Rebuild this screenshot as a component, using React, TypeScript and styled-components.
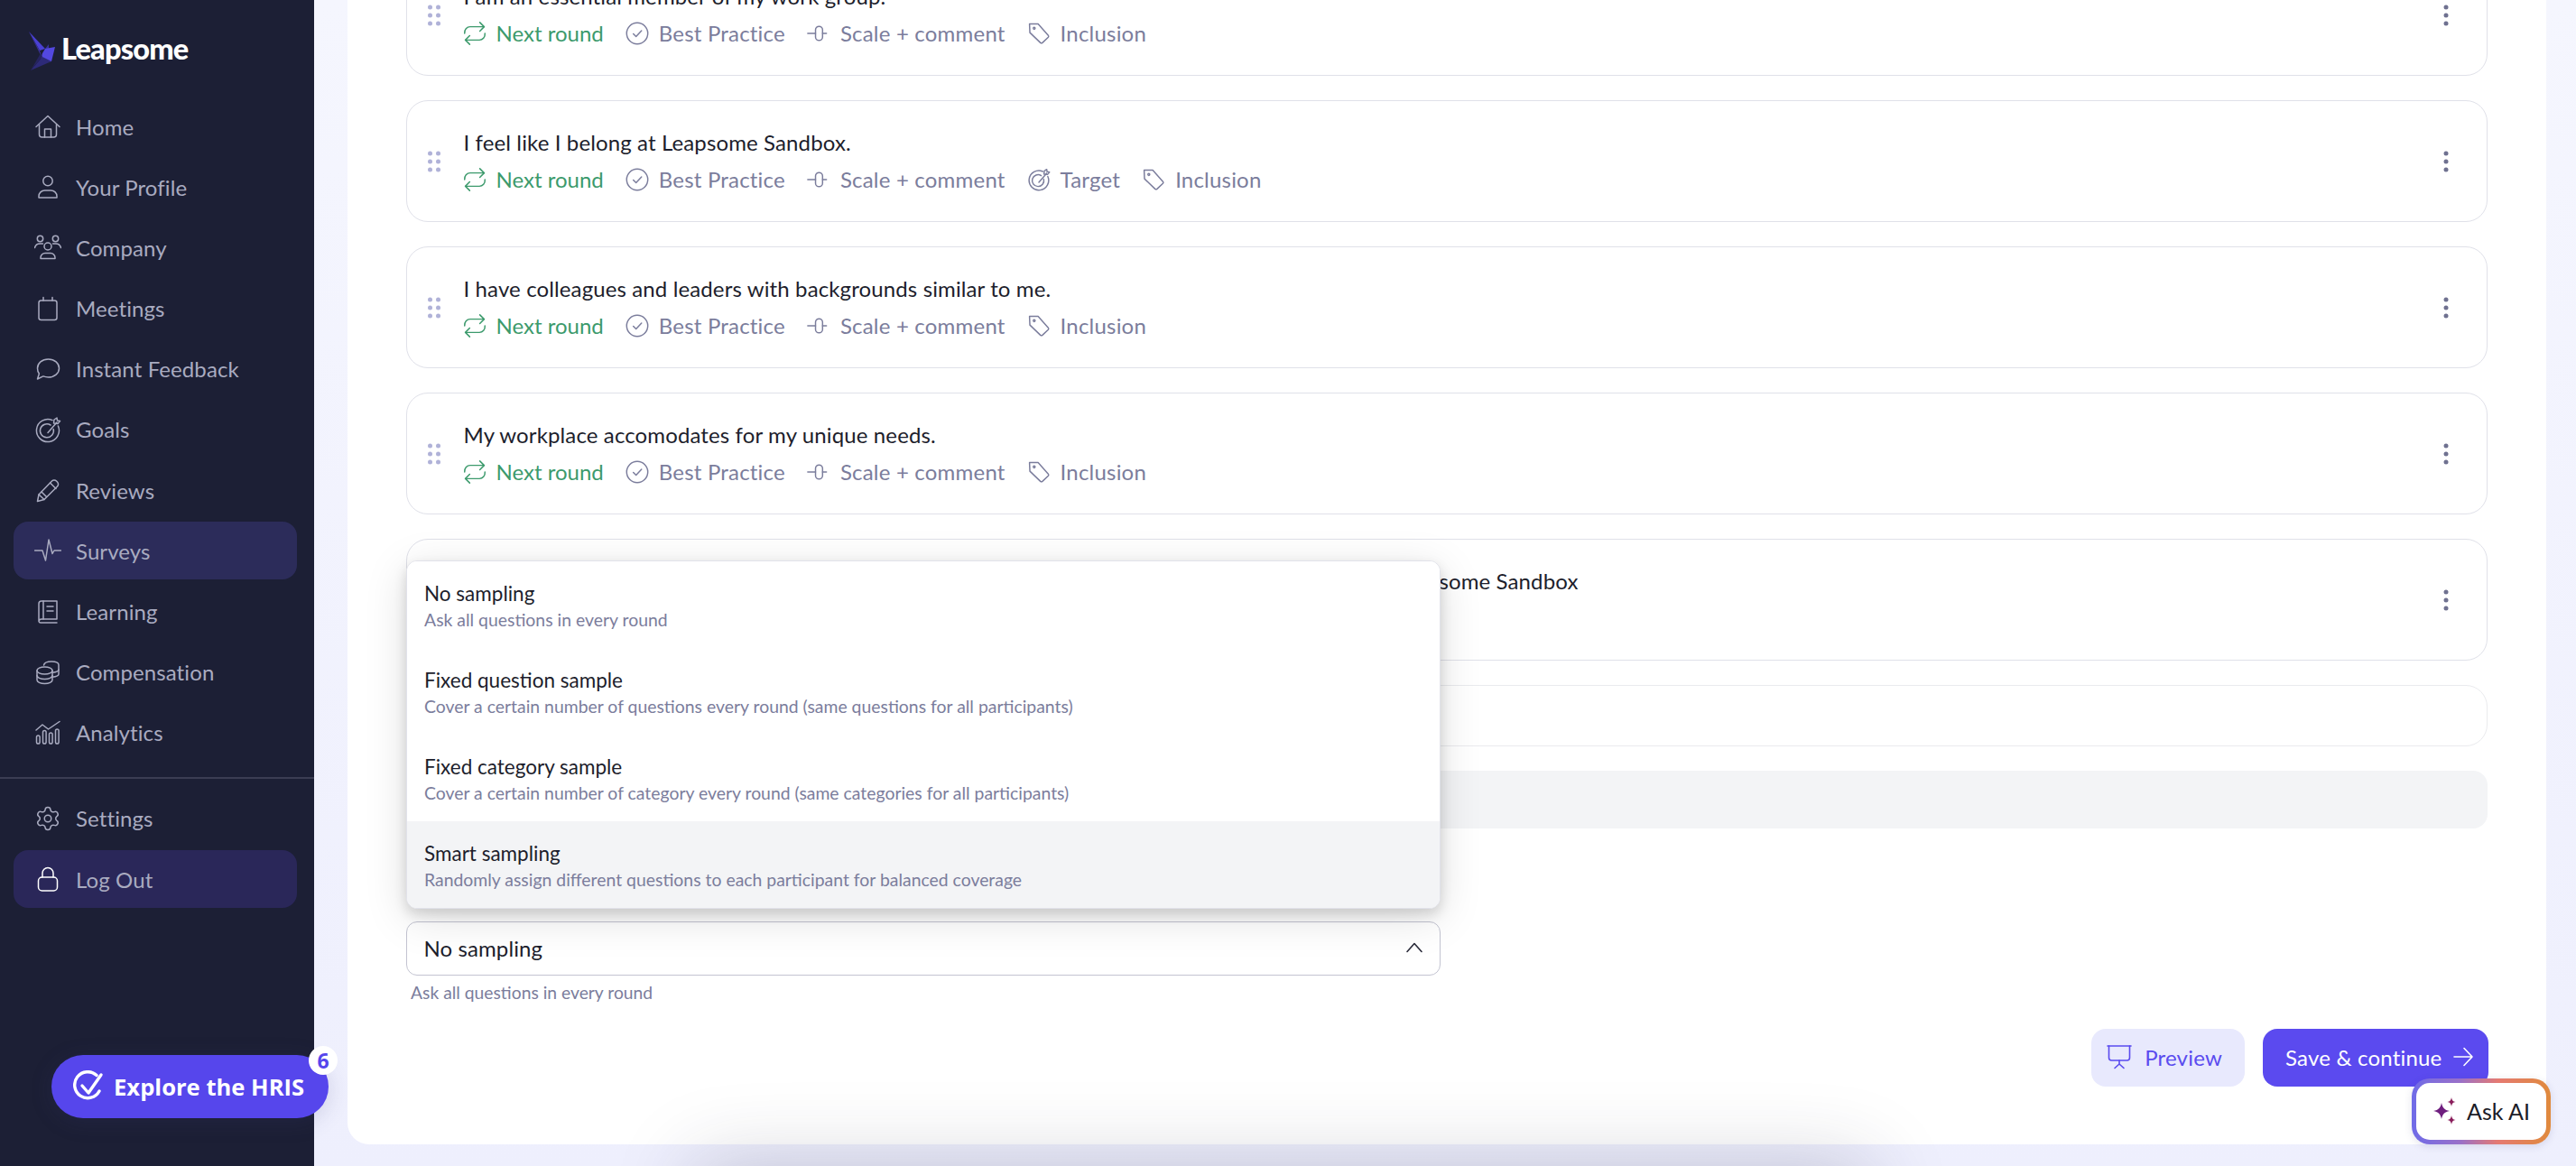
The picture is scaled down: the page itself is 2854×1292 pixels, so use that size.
import React, { FC, ReactNode } from "react";
import styled, { createGlobalStyle } from "styled-components";
import { Settings } from "lucide-react";

const GlobalStyle = createGlobalStyle`
  html, body {
    margin: 0;
    padding: 0;
    height: 100%;
    overflow: hidden;
    background: #eef0fd;
    font-family: "Lato", "Noto Sans", sans-serif;
  }
  * { box-sizing: border-box; }
`;

const Stroke: FC<{ size?: number; children: ReactNode }> = ({ size = 30, children }) => (
  <svg width={size} height={size} viewBox="0 0 30 30" fill="none" stroke="currentColor" strokeWidth={size < 30 ? 1.7 : 1.5} strokeLinecap="round" strokeLinejoin="round">
    {children}
  </svg>
);

const HomeIcon = () => (
  <Stroke>
    <path d="M2 15.5 15 3.5l13 12" />
    <path d="M5.5 13v11a3 3 0 0 0 3 3h13a3 3 0 0 0 3-3V13" />
    <path d="M11.5 27v-9h7v9" />
  </Stroke>
);
const ProfileIcon = () => (
  <Stroke>
    <circle cx="15" cy="8.5" r="5.2" />
    <path d="M5 27v-1.5a6.5 6.5 0 0 1 6.5-6.5h7a6.5 6.5 0 0 1 6.5 6.5V27z" />
  </Stroke>
);
const CompanyIcon = () => (
  <Stroke>
    <circle cx="15" cy="14" r="4" />
    <path d="M7 27.5v-1a5 5 0 0 1 5-5h6a5 5 0 0 1 5 5v1z" />
    <circle cx="6.5" cy="5.5" r="3.2" />
    <circle cx="23.5" cy="5.5" r="3.2" />
    <path d="M.5 15.5a6 6 0 0 1 6-4.5h3" />
    <path d="M29.5 15.5a6 6 0 0 0-6-4.5h-3" />
  </Stroke>
);
const CalendarIcon = () => (
  <Stroke>
    <rect x="5" y="6" width="20" height="21.5" rx="2.5" />
    <path d="M10 2.5V6M20 2.5V6" />
  </Stroke>
);
const ChatIcon = () => (
  <Stroke>
    <path d="M15.5 4C22.4 4 27.5 8.5 27.5 14S22.4 24 15.5 24c-2 0-3.9-.4-5.6-1.1L3.5 26l1.9-6C3.9 18.3 3.5 16.2 3.5 14 3.5 8.5 8.6 4 15.5 4z" />
  </Stroke>
);
const GoalIcon: FC<{ size?: number }> = ({ size }) => (
  <Stroke size={size}>
    <path d="M20 4.6A12.5 12.5 0 1 0 26.4 11" />
    <path d="M18 10a7.5 7.5 0 1 0 3.2 4.5" />
    <path d="M15 18.5 25 7" />
    <path d="m21.5 8 .5-4 3-2 .5 3 3 .5-2.5 3z" />
  </Stroke>
);
const PencilIcon = () => (
  <Stroke>
    <path d="M3.5 27.5 5 20 19.5 5a3.5 3.5 0 0 1 5 0l1 1a3.5 3.5 0 0 1 0 5L11 25.5z" />
    <path d="m17.5 7 6.5 6.5M5 20l6 5.5M8 17l5.5 5.5" />
  </Stroke>
);
const ActivityIcon = () => (
  <Stroke>
    <path d="M.5 15H9l3.5 11L16 3l4 15.5L22 15h7.5" />
  </Stroke>
);
const BookIcon = () => (
  <Stroke>
    <path d="M5 24.5V6a3 3 0 0 1 3-3h17v20H8a3 3 0 0 0-3 2.5 2 2 0 0 0 2 1.5h18" />
    <path d="M10 3v20M14 9h7M14 14h7" />
  </Stroke>
);
const CoinsIcon = () => (
  <Stroke>
    <ellipse cx="11.5" cy="13" rx="8.5" ry="4" />
    <path d="M3 13v10.5c0 2.2 3.8 4 8.5 4s8.5-1.8 8.5-4V13" />
    <path d="M3 18.5c0 2.2 3.8 4 8.5 4s8.5-1.8 8.5-4" />
    <path d="M10.5 7c.5-2.2 4-4 8.5-4 4.7 0 8 1.6 8 3.8V17c0 1.3-2.5 2.7-7 3.3" />
    <path d="M27 12c0 1.3-2.5 2.7-7 3.3" />
  </Stroke>
);
const ChartIcon = () => (
  <Stroke>
    <path d="m2 12 7-6 6.5 5L28 2.5" />
    <rect x="2.5" y="18" width="3.6" height="9" rx="1.8" />
    <rect x="9.5" y="12.5" width="3.6" height="14.5" rx="1.8" />
    <rect x="16.5" y="15" width="3.6" height="12" rx="1.8" />
    <rect x="23.5" y="11" width="3.6" height="16" rx="1.8" />
  </Stroke>
);
const LockIcon = () => (
  <Stroke>
    <rect x="4.5" y="13" width="21" height="15" rx="4" />
    <path d="M9 13V8.5a6 6 0 0 1 12 0V13" />
  </Stroke>
);
const RepeatIcon = () => (
  <Stroke size={26}>
    <path d="M2 15c-.5-5 3-8.5 7-8.5h18" />
    <path d="m21.5 1 5.5 5.5-5.5 5.5" />
    <path d="M28 15c.5 5-3 8.5-7 8.5H3" />
    <path d="m8.5 18-5.5 5.5L8.5 29" />
  </Stroke>
);
const CheckCircleIcon = () => (
  <Stroke size={26}>
    <circle cx="15" cy="15" r="13.5" />
    <path d="m10 15.5 3.5 3.5 7-7.5" />
  </Stroke>
);
const ScaleIcon = () => (
  <Stroke size={26}>
    <path d="M1 15h10M20 15h5" />
    <rect x="11" y="6" width="9" height="18" rx="4.5" />
  </Stroke>
);
const TagIcon = () => (
  <Stroke size={26}>
    <path d="M3 3h11l13 14.5a2 2 0 0 1 0 2.5l-7.5 7a2 2 0 0 1-2.5 0L3.5 14z" />
    <circle cx="9" cy="8.5" r="1.2" />
  </Stroke>
);

const LogoMark = () => (
  <svg width="32" height="44" viewBox="0 0 32 44">
    <polygon points="2,1 20,20 14,22" fill="#4a40d4" />
    <polygon points="2,1 14,22 17,31" fill="#3a3299" />
    <polygon points="20,20 24,15 24,21" fill="#3a3299" />
    <polygon points="20,20 31,18 27,34 14,36 17,25" fill="#5348e0" />
    <polygon points="17,29 27,34 4,44" fill="#2d2a78" />
    <polygon points="17,29 4,44 15,25" fill="#26245f" />
  </svg>
);

const Shell = styled.div`
  position: relative;
  display: flex;
  width: 100%;
  height: 100vh;
  overflow: hidden;
`;

const Sidebar = styled.aside`
  flex: 0 0 348px;
  background: #1c1f35;
  padding: 0 19px 0 15px;
  display: flex;
  flex-direction: column;
`;

const LogoRow = styled.div`
  height: 108px;
  flex: none;
  display: flex;
  align-items: flex-start;
  gap: 6px;
  padding: 34px 0 0 15px;
`;

const LogoText = styled.span`
  margin-top: -3px;
  font-size: 32.5px;
  line-height: 46px;
  font-weight: 900;
  letter-spacing: -0.8px;
  color: #ffffff;
`;

const Nav = styled.nav`
  display: flex;
  flex-direction: column;
  gap: 3.2px;
`;

const NavItem = styled.a<{ $active?: boolean; $strong?: boolean }>`
  height: 64px;
  display: flex;
  align-items: center;
  gap: 16px;
  padding-left: 23px;
  border-radius: 16px;
  background: ${(p) => (p.$active ? "#2c2c5a" : p.$strong ? "#2a2759" : "transparent")};
  color: #a9abc0;
  font-size: 24px;
  letter-spacing: 0.1px;
  svg {
    flex: none;
    color: ${(p) => (p.$strong ? "#ffffff" : "#a9abc0")};
  }
`;

const NavDivider = styled.div`
  height: 2px;
  flex: none;
  background: #3b3d53;
  margin: 13.8px -19px 8.8px -15px;
`;

const ExploreButton = styled.button`
  position: absolute;
  left: 57px;
  top: 1169px;
  width: 307px;
  height: 70px;
  border: 0;
  border-radius: 35px;
  background: #5646ec;
  color: #ffffff;
  display: flex;
  align-items: center;
  gap: 11px;
  padding: 0 0 0 24px;
  font-family: "Open Sans", sans-serif;
  font-weight: 700;
  font-size: 25.6px;
  box-shadow: 0 4px 24px rgba(60, 60, 120, 0.18);
`;

const ExploreBadge = styled.span`
  position: absolute;
  right: -10px;
  top: -10px;
  width: 32px;
  height: 32px;
  border-radius: 50%;
  background: #ffffff;
  color: #5646ec;
  font-size: 23px;
  line-height: 32px;
  text-align: center;
`;

const Main = styled.main`
  flex: 1;
  min-width: 0;
  padding: 0 33px 24px 37px;
  background: linear-gradient(180deg, #f5f6fe 0%, #eeeffd 100%);
`;

const Panel = styled.section`
  height: 100%;
  background: #ffffff;
  border-radius: 0 0 24px 24px;
  padding: 0 65px;
  overflow: hidden;
`;

const QuestionList = styled.div`
  margin-top: -51px;
  display: flex;
  flex-direction: column;
  gap: 27px;
`;

const QuestionCard = styled.article`
  height: 135px;
  flex: none;
  display: flex;
  align-items: center;
  gap: 26px;
  padding: 0 42.5px 0 22.5px;
  border: 1.5px solid #e0e1e9;
  border-radius: 24px;
  background: #ffffff;
`;

const QuestionBody = styled.div`
  flex: 1;
  min-width: 0;
  display: flex;
  flex-direction: column;
  gap: 7px;
`;

const QuestionText = styled.div<{ $width?: number }>`
  font-size: 24px;
  line-height: 34px;
  letter-spacing: 0.12px;
  color: #1d1e2c;
  white-space: nowrap;
  width: ${(p) => (p.$width ? `${p.$width}px` : "auto")};
  text-align: ${(p) => (p.$width ? "right" : "left")};
`;

const MetaRow = styled.div`
  display: flex;
  align-items: center;
  gap: 25px;
  height: 34px;
`;

const MetaItem = styled.span<{ $green?: boolean }>`
  display: inline-flex;
  align-items: center;
  gap: 11px;
  margin-left: -1px;
  font-size: 24px;
  line-height: 34px;
  letter-spacing: ${(p) => (p.$green ? "0" : "0.2px")};
  color: ${(p) => (p.$green ? "#3c9a6c" : "#7b7d9c")};
  svg {
    flex: none;
  }
`;

const AddQuestionBox = styled.div`
  height: 68px;
  border: 1.5px solid #eaebee;
  border-radius: 24px;
`;

const GreyBox = styled.div`
  height: 64px;
  background: #f3f4f6;
  border-radius: 16px;
`;

const SamplingField = styled.div`
  width: 1146px;
  margin-top: 103px;
`;

const SelectWrap = styled.div`
  position: relative;
`;

const SelectTrigger = styled.div`
  height: 60px;
  display: flex;
  align-items: center;
  justify-content: space-between;
  padding: 0 18px 2px 18.5px;
  border: 1.5px solid #c3c4d1;
  border-radius: 12px;
  background: #ffffff;
  font-size: 24px;
  letter-spacing: 0.1px;
  color: #1d1e2c;
`;

const HelperText = styled.div`
  margin-top: 5px;
  padding-left: 5px;
  font-size: 19.3px;
  line-height: 28px;
  color: #7b7d9c;
`;

const SelectMenu = styled.ul`
  position: absolute;
  left: 0;
  right: 0;
  bottom: calc(100% + 14px);
  margin: 0;
  padding: 0;
  list-style: none;
  background: #ffffff;
  border: 1px solid #e1e2ea;
  border-radius: 12px;
  overflow: hidden;
  box-shadow: 0 6px 14px rgba(0, 0, 0, 0.14), 0 10px 48px rgba(0, 0, 0, 0.13);
`;

const MenuOption = styled.li<{ $hover?: boolean }>`
  height: 96px;
  padding: 21px 19px 0;
  background: ${(p) => (p.$hover ? "#f3f4f6" : "#ffffff")};
`;

const OptionTitle = styled.div`
  font-size: 22.5px;
  line-height: 30px;
  color: #1d1e2c;
`;

const OptionHint = styled.div`
  font-size: 19.4px;
  line-height: 28px;
  color: #7b7d9c;
`;

const Footer = styled.div`
  display: flex;
  justify-content: flex-end;
  align-items: center;
  gap: 20px;
  margin: 26px -1px 0 0;
`;

const Button = styled.button<{ $primary?: boolean }>`
  height: 64px;
  border: 0;
  border-radius: 16px;
  display: inline-flex;
  align-items: center;
  gap: ${(p) => (p.$primary ? "12.5px" : "14px")};
  padding: ${(p) => (p.$primary ? "0 17px 2px 25px" : "0 25px 2px 17px")};
  background: ${(p) => (p.$primary ? "#5b4aef" : "#e8e9fd")};
  color: ${(p) => (p.$primary ? "#ffffff" : "#5a4bef")};
  font-family: "Lato", sans-serif;
  font-size: 24px;
  letter-spacing: 0.2px;
`;

const AskAi = styled.div`
  position: absolute;
  left: 2672px;
  top: 1195px;
  width: 154px;
  height: 73px;
  padding: 5px;
  border-radius: 20px;
  background: linear-gradient(90deg, #6f6be8 0%, #9a70c8 35%, #e57a72 62%, #e08a3c 100%);
  box-shadow: 0 2px 8px rgba(60, 60, 120, 0.15);
`;

const AskAiInner = styled.div`
  width: 100%;
  height: 100%;
  border-radius: 15px;
  background: #ffffff;
  display: flex;
  align-items: center;
  gap: 11px;
  padding: 0 0 2px 17px;
  font-size: 25px;
  color: #1c1c28;
`;

const BottomGlow = styled.div`
  position: absolute;
  left: 820px;
  width: 1200px;
  top: 1340px;
  height: 40px;
  box-shadow: 0 0 90px 50px rgba(40, 40, 70, 0.22);
`;

const HandleSvg = styled.svg`
  flex: none;
  fill: #b0b2d8;
`;

const MoreSvg = styled.svg`
  flex: none;
  fill: #6f7190;
`;

const DragHandle = () => (
  <HandleSvg width="14" height="24" viewBox="0 0 14 24">
    {[3, 12, 21].map((y) => (
      <React.Fragment key={y}>
        <circle cx="2.5" cy={y} r="2.5" />
        <circle cx="11.5" cy={y} r="2.5" />
      </React.Fragment>
    ))}
  </HandleSvg>
);

const MoreDots = () => (
  <MoreSvg width="6" height="24" viewBox="0 0 6 24">
    <circle cx="3" cy="3" r="2.5" />
    <circle cx="3" cy="12" r="2.5" />
    <circle cx="3" cy="21" r="2.5" />
  </MoreSvg>
);

const navTop: { label: string; icon: ReactNode; active?: boolean }[] = [
  { label: "Home", icon: <HomeIcon /> },
  { label: "Your Profile", icon: <ProfileIcon /> },
  { label: "Company", icon: <CompanyIcon /> },
  { label: "Meetings", icon: <CalendarIcon /> },
  { label: "Instant Feedback", icon: <ChatIcon /> },
  { label: "Goals", icon: <GoalIcon /> },
  { label: "Reviews", icon: <PencilIcon /> },
  { label: "Surveys", icon: <ActivityIcon />, active: true },
  { label: "Learning", icon: <BookIcon /> },
  { label: "Compensation", icon: <CoinsIcon /> },
  { label: "Analytics", icon: <ChartIcon /> },
];

const questions: { text: string; target?: boolean; width?: number }[] = [
  { text: "I am an essential member of my work group." },
  { text: "I feel like I belong at Leapsome Sandbox.", target: true },
  { text: "I have colleagues and leaders with backgrounds similar to me." },
  { text: "My workplace accomodates for my unique needs." },
  { text: "I believe that everyone is treated fairly and respectfully regardless of their background at Leapsome Sandbox", width: 1235 },
];

const options = [
  { title: "No sampling", hint: "Ask all questions in every round" },
  { title: "Fixed question sample", hint: "Cover a certain number of questions every round (same questions for all participants)" },
  { title: "Fixed category sample", hint: "Cover a certain number of category every round (same categories for all participants)" },
  { title: "Smart sampling", hint: "Randomly assign different questions to each participant for balanced coverage", hover: true },
];

const App: FC = () => (
  <Shell>
    <GlobalStyle />
    <Sidebar>
      <LogoRow>
        <LogoMark />
        <LogoText>Leapsome</LogoText>
      </LogoRow>
      <Nav>
        {navTop.map((item) => (
          <NavItem key={item.label} $active={item.active}>
            {item.icon}
            {item.label}
          </NavItem>
        ))}
        <NavDivider />
        <NavItem>
          <Settings size={30} strokeWidth={1.2} />
          Settings
        </NavItem>
        <NavItem $strong>
          <LockIcon />
          Log Out
        </NavItem>
      </Nav>
    </Sidebar>

    <Main>
      <Panel>
        <QuestionList>
          {questions.map((q) => (
            <QuestionCard key={q.text}>
              <DragHandle />
              <QuestionBody>
                <QuestionText $width={q.width}>{q.text}</QuestionText>
                <MetaRow>
                  <MetaItem $green>
                    <RepeatIcon />
                    Next round
                  </MetaItem>
                  <MetaItem>
                    <CheckCircleIcon />
                    Best Practice
                  </MetaItem>
                  <MetaItem>
                    <ScaleIcon />
                    Scale + comment
                  </MetaItem>
                  {q.target && (
                    <MetaItem>
                      <GoalIcon size={26} />
                      Target
                    </MetaItem>
                  )}
                  <MetaItem>
                    <TagIcon />
                    Inclusion
                  </MetaItem>
                </MetaRow>
              </QuestionBody>
              <MoreDots />
            </QuestionCard>
          ))}
          <AddQuestionBox />
          <GreyBox />
        </QuestionList>

        <SamplingField>
          <SelectWrap>
            <SelectTrigger>
              No sampling
              <svg width="20" height="12" viewBox="0 0 20 12" fill="none" stroke="#2a2b3a" strokeWidth="1.6" strokeLinecap="round" strokeLinejoin="round">
                <path d="M2 10.5 10 1.5l8 9" />
              </svg>
            </SelectTrigger>
            <SelectMenu>
              {options.map((o) => (
                <MenuOption key={o.title} $hover={o.hover}>
                  <OptionTitle>{o.title}</OptionTitle>
                  <OptionHint>{o.hint}</OptionHint>
                </MenuOption>
              ))}
            </SelectMenu>
          </SelectWrap>
          <HelperText>Ask all questions in every round</HelperText>
        </SamplingField>

        <Footer>
          <Button>
            <svg width="28" height="28" viewBox="0 0 28 28" fill="none" stroke="currentColor" strokeWidth="1.6" strokeLinecap="round" strokeLinejoin="round">
              <path d="M1 2h26" />
              <path d="M2.5 2v13a3 3 0 0 0 3 3h17a3 3 0 0 0 3-3V2" />
              <path d="M14 18v4M14 22l-5 4.5M14 22l5 4.5" />
            </svg>
            Preview
          </Button>
          <Button $primary>
            Save &amp; continue
            <svg width="22" height="22" viewBox="0 0 22 22" fill="none" stroke="currentColor" strokeWidth="1.6" strokeLinecap="round" strokeLinejoin="round">
              <path d="M1 11h20M12 1.5 21 11l-9 9.5" />
            </svg>
          </Button>
        </Footer>
      </Panel>
    </Main>

    <ExploreButton>
      <svg width="34" height="36" viewBox="0 0 34 36" fill="none" stroke="#ffffff" strokeWidth="3.4" strokeLinecap="round" strokeLinejoin="round">
        <path d="M26 5.5A14.5 14.5 0 1 0 29 23" />
        <path d="m10 17 7 8L31 5" />
      </svg>
      Explore the HRIS
      <ExploreBadge>6</ExploreBadge>
    </ExploreButton>

    <AskAi>
      <AskAiInner>
        <svg width="28" height="30" viewBox="0 0 28 30">
          <path d="M11 6c1 5 3 8 9 9-6 1-8 4-9 9-1-5-3-8-9-9 6-1 8-4 9-9z" fill="#6f1f7f" />
          <path d="M22 0c.5 3 1.5 4.5 4.5 5-3 .5-4 2-4.5 5-.5-3-1.5-4.5-4.5-5 3-.5 4-2 4.5-5z" fill="#8a1f5c" />
          <path d="M22 20c.5 3 1.5 4.5 4.5 5-3 .5-4 2-4.5 5-.5-3-1.5-4.5-4.5-5 3-.5 4-2 4.5-5z" fill="#8a1f5c" />
        </svg>
        Ask AI
      </AskAiInner>
    </AskAi>

    <BottomGlow />
  </Shell>
);

export default App;
